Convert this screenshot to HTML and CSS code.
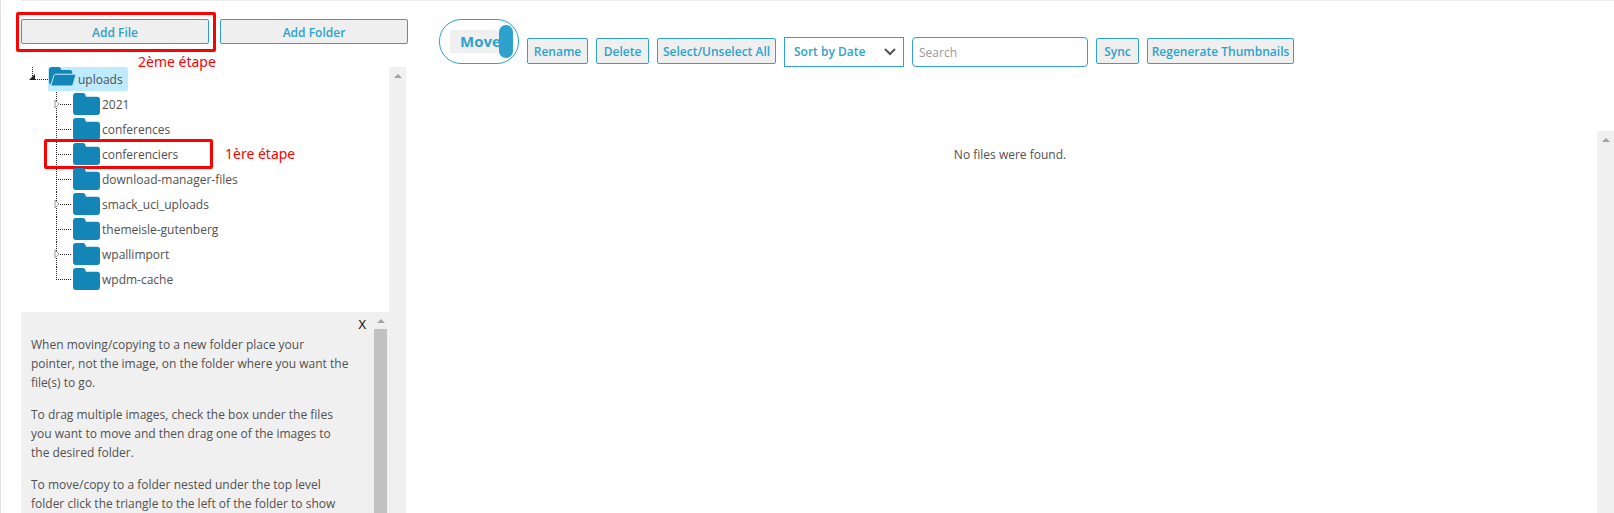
FILE: index.html
```html
<!DOCTYPE html>
<html lang="en">
<head>
<meta charset="utf-8">
<title>Media Library Folders</title>
<link rel="stylesheet" href="styles.css">
</head>
<body>
<svg class="defs" aria-hidden="true">
  <symbol id="folder" viewBox="0 0 27 22"><path d="M3 0h7c1.500 0 2 .8 2.400 2l.5 1.800H24c2 0 3 1.200 3 3V19c0 2-1 3-3 3H3c-2 0-3-1-3-3V3c0-2 1-3 3-3z"/></symbol>
  <symbol id="folder-open" viewBox="0 0 27 19"><path d="M3 0h6.500c1.300 0 2 .6 2.400 1.700l.4 1.200H21c1.400 0 2.300.9 2.300 2.300v2H7.600L1.500 17.500C.5 17 0 15.800 0 14.800V3c0-2 1-3 3-3z"/><path class="edge" d="M7.200 7.200h17.500c1.900 0 2.300.8 1.900 2l-2.400 7.800c-.5 1.500-1.200 2-2.600 2H3.500c-1.300 0-1.600-.6-1.300-1.500l2.500-8.500c.4-1.200 1.100-1.800 2.500-1.800z"/></symbol>
  <symbol id="arrow" viewBox="0 0 6 10"><path d="M1 1l4 4-4 4z"/></symbol>
</svg>
<div class="page">
  <aside class="sidebar">
    <div class="actions">
      <div class="marked step-two">
        <button class="btn" type="button">Add File</button>
        <span class="note">2ème étape</span>
      </div>
      <button class="btn" type="button">Add Folder</button>
    </div>
    <div class="panel">
      <div class="panel-body">
        <div class="tree">
          <div class="root">
            <i class="root-line"></i>
            <a class="node selected" href="#"><svg class="icon open"><use href="#folder-open"/></svg>uploads</a>
          </div>
          <ul class="branch">
            <li class="item"><i class="twig"></i><svg class="arrow"><use href="#arrow"/></svg><a class="node" href="#"><svg class="icon"><use href="#folder"/></svg>2021</a></li>
            <li class="item"><i class="twig"></i><a class="node" href="#"><svg class="icon"><use href="#folder"/></svg>conferences</a></li>
            <li class="item marked step-one"><i class="twig"></i><a class="node" href="#"><svg class="icon"><use href="#folder"/></svg>conferenciers</a><span class="note">1ère étape</span></li>
            <li class="item"><i class="twig"></i><a class="node" href="#"><svg class="icon"><use href="#folder"/></svg>download-manager-files</a></li>
            <li class="item"><i class="twig"></i><svg class="arrow"><use href="#arrow"/></svg><a class="node" href="#"><svg class="icon"><use href="#folder"/></svg>smack_uci_uploads</a></li>
            <li class="item"><i class="twig"></i><a class="node" href="#"><svg class="icon"><use href="#folder"/></svg>themeisle-gutenberg</a></li>
            <li class="item"><i class="twig"></i><svg class="arrow"><use href="#arrow"/></svg><a class="node" href="#"><svg class="icon"><use href="#folder"/></svg>wpallimport</a></li>
            <li class="item"><i class="twig"></i><a class="node" href="#"><svg class="icon"><use href="#folder"/></svg>wpdm-cache</a></li>
          </ul>
        </div>
        <div class="help">
          <div class="help-body">
            <button class="close" type="button" aria-label="Close">X</button>
            <p>When moving/copying to a new folder place your<br>pointer, not the image, on the folder where you want the<br>file(s) to go.</p>
            <p>To drag multiple images, check the box under the files<br>you want to move and then drag one of the images to<br>the desired folder.</p>
            <p>To move/copy to a folder nested under the top level<br>folder click the triangle to the left of the folder to show</p>
          </div>
          <div class="scroll"><i class="up"></i><i class="thumb"></i></div>
        </div>
      </div>
      <div class="scroll wide"><i class="up"></i></div>
    </div>
  </aside>
  <main class="main">
    <div class="toolbar">
      <button class="toggle" type="button" role="switch" aria-checked="true"><span class="toggle-label">Move</span><i class="knob"></i></button>
      <button class="btn rename" type="button">Rename</button>
      <button class="btn delete" type="button">Delete</button>
      <button class="btn select-all" type="button">Select/Unselect All</button>
      <div class="sort">
        <select class="sort-select" aria-label="Sort order"><option>Sort by Date</option><option>Sort by Name</option></select>
        <svg class="chevron" viewBox="0 0 12 8"><path d="M1 1l5 5 5-5"/></svg>
      </div>
      <input class="search" type="search" placeholder="Search" aria-label="Search">
      <button class="btn sync" type="button">Sync</button>
      <button class="btn regenerate" type="button">Regenerate Thumbnails</button>
    </div>
    <div class="files">
      <p class="empty">No files were found.</p>
      <div class="scroll wide"><i class="up"></i></div>
    </div>
  </main>
</div>
</body>
</html>
```
FILE: styles.css
```css
*, *::before, *::after { box-sizing: border-box; }

body {
  margin: 0;
  height: 100vh;
  overflow: hidden;
  background: #fff;
  color: #505050;
  font: 12px/19px "Open Sans", "Noto Sans", sans-serif;
}

.defs { position: absolute; width: 0; height: 0; }

.page {
  display: flex;
  height: 100%;
  padding-left: 20px;
  border-left: 1px solid #e2e2e2;
}

/* Sidebar */
.sidebar {
  display: flex;
  flex-direction: column;
  flex: 0 0 402px;
  border-top: 1px solid #ececec;
  padding-top: 18px;
}

.actions {
  display: grid;
  grid-template-columns: 188px 188px;
  gap: 11px;
  margin-bottom: 23px;
}
.actions .btn { width: 100%; height: 25px; }

.btn {
  display: block;
  height: 26px;
  padding: 2px 0 0;
  border: 1px solid #2ea2cc;
  border-radius: 2px;
  background: #efefef;
  color: #2ea2cc;
  font: 600 12px/20px "Open Sans", "Noto Sans", sans-serif;
  white-space: nowrap;
}

.panel { display: flex; flex: 1; width: 385px; min-height: 0; }
.panel-body { display: flex; flex-direction: column; flex: 1; min-width: 0; }

.scroll {
  display: flex;
  flex-direction: column;
  align-items: center;
  flex: 0 0 13px;
  background: #f0f0f0;
}
.scroll.wide { flex-basis: 17px; }
.up {
  flex: none;
  margin-top: 7px;
  border: 4px solid transparent;
  border-top: 0;
  border-bottom-color: #a3a3a3;
}
.thumb { flex: 1; width: 13px; margin-top: 6px; background: #c1c1c1; }

/* Folder tree */
.tree { flex: 0 0 245px; }
.root { display: flex; height: 25px; padding-left: 8px; }
.root-line {
  position: relative;
  width: 16px;
  height: 13px;
  margin-left: 3px;
  border-left: 1px dotted #222;
  border-bottom: 1px dotted #222;
}
.root-line::after {
  content: "";
  position: absolute;
  left: -4px;
  bottom: -1px;
  border-left: 6px solid transparent;
  border-bottom: 6px solid #222;
}
.node {
  display: flex;
  align-items: center;
  gap: 2px;
  height: 24px;
  color: #505050;
  text-decoration: none;
}
.selected {
  align-items: flex-start;
  width: 80px;
  padding-left: 1px;
  border-radius: 2px;
  background: #beebff;
  line-height: 25px;
}
.icon { flex: none; width: 27px; height: 22px; fill: #1385b7; }
.icon.open { height: 19px; }
.edge { stroke: #beebff; stroke-width: 1px; }
.branch { margin: 0; padding: 0 0 0 35px; list-style: none; }
.item {
  position: relative;
  height: 25px;
  padding-left: 16px;
  border-left: 1px dotted #222;
}
.item:last-child { border-left-color: transparent; }
.twig {
  position: absolute;
  left: -1px;
  top: 0;
  width: 15px;
  height: 13px;
  border-bottom: 1px dotted #222;
}
.item:last-child .twig { border-left: 1px dotted #222; }
.arrow {
  position: absolute;
  left: -3px;
  top: 7px;
  width: 6px;
  height: 10px;
  fill: #fff;
  stroke: #999;
}

/* Red step markers */
.marked { position: relative; }
.marked::after {
  content: "";
  position: absolute;
  border: 3px solid #f00;
  border-radius: 2px;
  pointer-events: none;
}
.step-two::after { inset: -7px -7px -8px -5px; }
.step-one::after { left: -13px; top: -3px; width: 169px; height: 30px; }
.note {
  position: absolute;
  color: #f00;
  font: 14px/18px "Noto Sans", "Open Sans", sans-serif;
  white-space: nowrap;
}
.step-two .note { left: 117px; top: 34px; }
.step-one .note { left: 168px; top: 3px; }

/* Help box */
.help { display: flex; flex: 1; min-height: 0; padding-right: 2px; overflow: hidden; background: #f0f0f0; }
.help-body { flex: 1; padding: 2px 0 0 10px; }
.help p { margin: 0 8px 13px 0; }
.close {
  display: block;
  height: 21px;
  margin: 0 8px 0 auto;
  padding: 0;
  border: 0;
  background: none;
  color: #000;
  font: 13px/19px "Open Sans", "Noto Sans", sans-serif;
}

/* Main area */
.main { display: flex; flex-direction: column; flex: 1; min-width: 0; border-top: 1px solid #ececec; padding-top: 18px; }
.toolbar {
  display: flex;
  align-items: flex-end;
  gap: 8px;
  height: 48px;
  padding-left: 16px;
}
.toolbar .btn { margin-bottom: 3px; }
.rename { width: 61px; }
.delete { width: 53px; }
.select-all { width: 119px; }
.sync { width: 43px; }
.regenerate { width: 147px; }
.toggle {
  position: relative;
  align-self: flex-start;
  width: 80px;
  height: 45px;
  padding: 0 6px 0 10px;
  border: 1px solid #2ea2cc;
  border-radius: 22px;
  background: #fff;
  color: #2ea2cc;
  font: 700 15px/23px "Open Sans", "Noto Sans", sans-serif;
}
.toggle-label { display: block; padding-left: 10px; background: #f0f0f0; text-align: left; }
.knob {
  position: absolute;
  right: 5px;
  top: 5px;
  width: 14px;
  height: 33px;
  border-radius: 7px;
  background: #2ea2cc;
}
.sort { position: relative; width: 120px; }
.sort-select {
  display: block;
  width: 100%;
  height: 30px;
  padding: 0 9px;
  appearance: none;
  border: 1px solid #2ea2cc;
  border-radius: 0;
  background: #fff;
  color: #2ea2cc;
  font: 600 12px/20px "Open Sans", "Noto Sans", sans-serif;
}
.chevron {
  position: absolute;
  right: 8px;
  top: 11px;
  width: 12px;
  height: 8px;
  fill: none;
  stroke: #555;
  stroke-width: 2px;
}
.search {
  width: 176px;
  height: 30px;
  padding: 0 6px;
  appearance: none;
  border: 1px solid #2ea2cc;
  border-radius: 4px;
  background: #fff;
  color: #555;
  font: 12px/20px "Open Sans", "Noto Sans", sans-serif;
}
.search::placeholder { color: #999; }

.files { display: flex; flex: 1; margin-top: 64px; }
.empty { flex: 1; margin: 14px 0 0; text-align: center; }
```
